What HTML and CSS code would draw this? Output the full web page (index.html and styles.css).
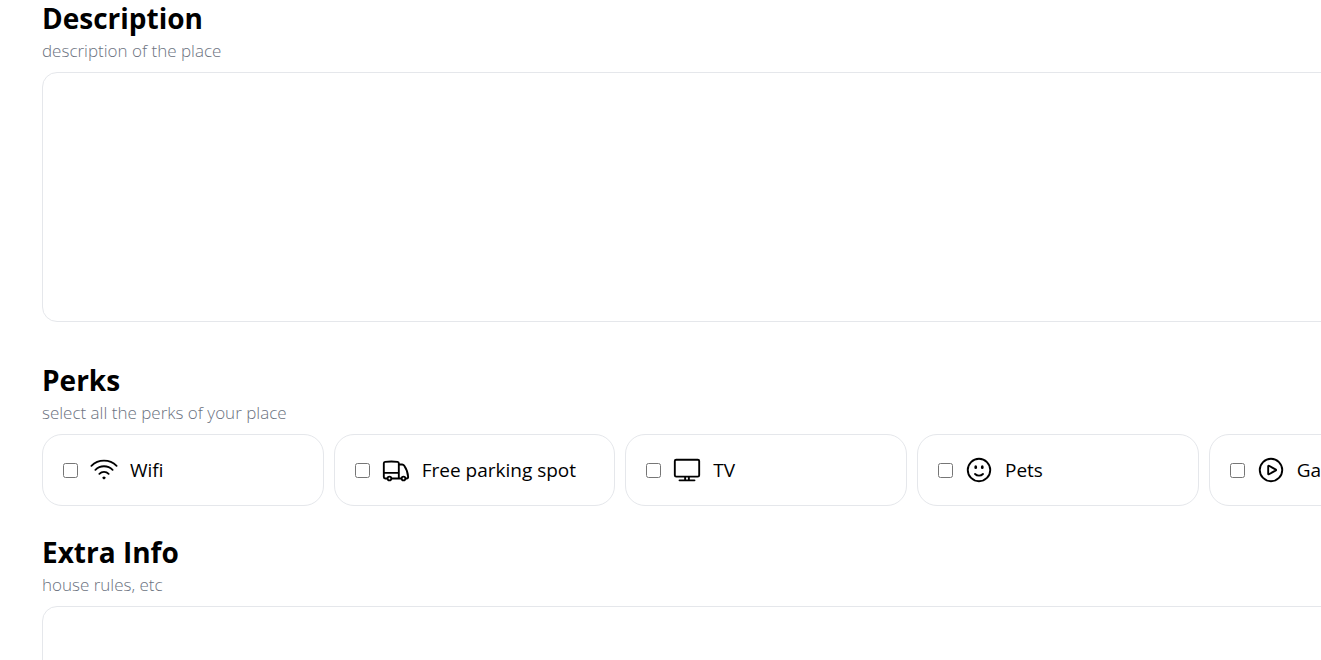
FILE: index.html
```html
<!DOCTYPE html>
<html lang="en">
<head>
<meta charset="utf-8">
<title>Place details</title>
<link rel="stylesheet" href="styles.css">
</head>
<body>
<form class="form">
  <section class="section">
    <h2 class="title"><label for="description">Description</label></h2>
    <p class="hint">description of the place</p>
    <textarea class="textarea" id="description"></textarea>
  </section>
  <section class="section">
    <h2 class="title">Perks</h2>
    <p class="hint">select all the perks of your place</p>
    <div class="perks">
      <label class="perk">
        <input class="check" type="checkbox" name="wifi">
        <svg class="icon" viewBox="0 0 24 24"><path d="M8.288 15.038a5.25 5.25 0 017.424 0M5.106 11.856c3.807-3.808 9.98-3.808 13.788 0M1.924 8.674c5.565-5.565 14.587-5.565 20.152 0M12.53 18.22l-.53.53-.53-.53a.75.75 0 011.06 0z"/></svg>
        <span>Wifi</span>
      </label>
      <label class="perk">
        <input class="check" type="checkbox" name="parking">
        <svg class="icon" viewBox="0 0 24 24"><path d="M8.25 18.75a1.5 1.5 0 01-3 0m3 0a1.5 1.5 0 00-3 0m3 0h6m-9 0H3.375a1.125 1.125 0 01-1.125-1.125V14.25m17.25 4.5a1.5 1.5 0 01-3 0m3 0a1.5 1.5 0 00-3 0m3 0h1.125c.621 0 1.129-.504 1.09-1.124a17.902 17.902 0 00-3.213-9.193 2.056 2.056 0 00-1.58-.86H14.25M16.5 18.75h-2.25m0-11.177v-.958c0-.568-.422-1.048-.987-1.106a48.554 48.554 0 00-10.026 0 1.106 1.106 0 00-.987 1.106v7.635m12-6.677v6.677m0 4.5v-4.5m0 0h-12"/></svg>
        <span>Free parking spot</span>
      </label>
      <label class="perk">
        <input class="check" type="checkbox" name="tv">
        <svg class="icon" viewBox="0 0 24 24"><path d="M6 20.25h12m-7.5-3v3m3-3v3m-10.125-3h17.25c.621 0 1.125-.504 1.125-1.125V4.875c0-.621-.504-1.125-1.125-1.125H3.375c-.621 0-1.125.504-1.125 1.125v11.25c0 .621.504 1.125 1.125 1.125z"/></svg>
        <span>TV</span>
      </label>
      <label class="perk">
        <input class="check" type="checkbox" name="pets">
        <svg class="icon" viewBox="0 0 24 24"><path d="M15.182 15.182a4.5 4.5 0 01-6.364 0M21 12a9 9 0 11-18 0 9 9 0 0118 0zM9.75 9.75c0 .414-.168.75-.375.75S9 10.164 9 9.75 9.168 9 9.375 9s.375.336.375.75zm-.375 0h.008v.015h-.008V9.75zm5.625 0c0 .414-.168.75-.375.75s-.375-.336-.375-.75.168-.75.375-.75.375.336.375.75zm-.375 0h.008v.015h-.008V9.75z"/></svg>
        <span>Pets</span>
      </label>
      <label class="perk">
        <input class="check" type="checkbox" name="games">
        <svg class="icon" viewBox="0 0 24 24"><path d="M21 12a9 9 0 11-18 0 9 9 0 0118 0z"/><path d="M15.91 11.672a.375.375 0 010 .656l-5.603 3.113a.375.375 0 01-.557-.328V8.887c0-.286.307-.466.557-.327l5.603 3.112z"/></svg>
        <span>Games</span>
      </label>
    </div>
  </section>
  <section class="section">
    <h2 class="title"><label for="extra">Extra Info</label></h2>
    <p class="hint">house rules, etc</p>
    <textarea class="textarea" id="extra"></textarea>
  </section>
</form>
</body>
</html>
```
FILE: styles.css
```css
* {
  box-sizing: border-box;
}

html {
  overflow: hidden;
}

body {
  margin: 0;
  background: #fff;
  color: #000;
  font-family: "Segoe UI", "Open Sans", "Noto Sans", sans-serif;
}

/* The form is wider than the window and runs off its right edge. */
.form {
  width: 138vw;
  padding: 0 41px 0 42px;
}

.section {
  margin-bottom: 28px;
}

.title {
  margin: 0 0 2px;
  font-size: 28px;
  font-weight: 700;
  line-height: 36px;
}

.hint {
  margin: 0 0 9px;
  color: #6b7280;
  font-size: 17px;
  font-weight: 300;
  line-height: 25px;
}

.textarea {
  display: block;
  width: 100%;
  height: 250px;
  margin-bottom: 40px;
  padding: 10px 15px;
  border: 1px solid #e5e7eb;
  border-radius: 15px;
  background: #fff;
  font: inherit;
  resize: none;
}

.perks {
  display: grid;
  grid-template-columns: repeat(6, 1fr);
  gap: 10px;
}

.perk {
  display: flex;
  align-items: center;
  gap: 11px;
  padding: 20px;
  border: 1px solid #e5e7eb;
  border-radius: 20px;
  font-size: 19px;
  line-height: 30px;
}

.check {
  width: 15px;
  height: 15px;
  margin: 0;
}

.icon {
  width: 30px;
  height: 30px;
  fill: none;
  stroke: currentColor;
  stroke-width: 1.5;
  stroke-linecap: round;
  stroke-linejoin: round;
}
```
